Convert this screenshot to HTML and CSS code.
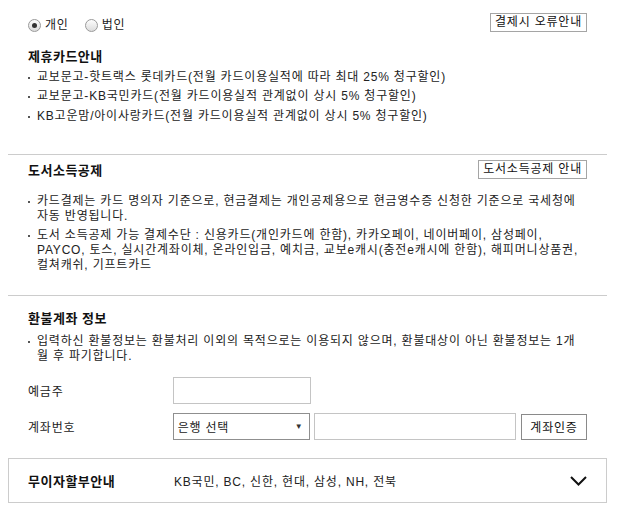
FILE: index.html
```html
<!DOCTYPE html>
<html lang="ko">
<head>
  <meta charset="UTF-8">
  <title>결제 안내</title>
  <link rel="stylesheet" href="styles.css">
</head>
<body>

<div class="wrap">

  <div class="section first">
    <div class="head-row">
      <div class="radios">
        <label class="radio checked"><span class="dot"></span>개인</label>
        <label class="radio"><span class="dot"></span>법인</label>
      </div>
      <button type="button" class="btn-line">결제시 오류안내</button>
    </div>
    <h3 class="tit">제휴카드안내</h3>
    <ul class="bullets">
      <li>교보문고-핫트랙스 롯데카드(전월 카드이용실적에 따라 최대 25% 청구할인)</li>
      <li>교보문고-KB국민카드(전월 카드이용실적 관계없이 상시 5% 청구할인)</li>
      <li>KB고운맘/아이사랑카드(전월 카드이용실적 관계없이 상시 5% 청구할인)</li>
    </ul>
  </div>

  <div class="section second">
    <div class="head-row bottom">
      <h3 class="tit">도서소득공제</h3>
      <button type="button" class="btn-line">도서소득공제 안내</button>
    </div>
    <ul class="bullets wide">
      <li>카드결제는 카드 명의자 기준으로, 현금결제는 개인공제용으로 현금영수증 신청한 기준으로 국세청에<br>자동 반영됩니다.</li>
      <li>도서 소득공제 가능 결제수단 : 신용카드(개인카드에 한함), 카카오페이, 네이버페이, 삼성페이,<br>PAYCO, 토스, 실시간계좌이체, 온라인입금, 예치금, 교보e캐시(충전e캐시에 한함), 해피머니상품권,<br>컬쳐캐쉬, 기프트카드</li>
    </ul>
  </div>

  <div class="section third">
    <h3 class="tit">환불계좌 정보</h3>
    <ul class="bullets wide">
      <li>입력하신 환불정보는 환불처리 이외의 목적으로는 이용되지 않으며, 환불대상이 아닌 환불정보는 1개<br>월 후 파기합니다.</li>
    </ul>
    <div class="form-row">
      <span class="label">예금주</span>
      <input type="text" class="inp name">
    </div>
    <div class="form-row">
      <span class="label">계좌번호</span>
      <div class="select">은행 선택<span class="arrow">▼</span></div>
      <input type="text" class="inp account">
      <button type="button" class="btn-auth">계좌인증</button>
    </div>
  </div>

  <div class="install">
    <strong class="install-tit">무이자할부안내</strong>
    <span class="install-txt">KB국민, BC, 신한, 현대, 삼성, NH, 전북</span>
    <svg class="chev" width="17" height="10" viewBox="0 0 17 10">
      <polyline points="1,1 8.5,8.5 16,1" fill="none" stroke="#111" stroke-width="2"/>
    </svg>
  </div>

</div>

</body>
</html>
```

FILE: styles.css
```css
body {
  margin: 8px;
  font-family: "Liberation Sans", "Noto Sans CJK KR", sans-serif;
  font-size: 12px;
  letter-spacing: 0.8px;
  color: #222;
  background: #fff;
}
.wrap {
  width: 599px;
}
.section {
  padding: 0 20px;
  border-bottom: 1px solid #ccc;
}
.section.first {
  padding-top: 5px;
  padding-bottom: 30px;
}
.section.second {
  padding-top: 5px;
  padding-bottom: 22px;
}
.section.third {
  border-bottom: none;
  padding-top: 15px;
  padding-bottom: 18px;
}
.head-row {
  display: flex;
  justify-content: space-between;
  align-items: center;
}
.head-row.bottom {
  align-items: flex-end;
}
.radios {
  display: flex;
  gap: 16px;
  align-self: flex-end;
}
.radio {
  display: flex;
  align-items: center;
  gap: 4px;
  line-height: 14px;
}
.dot {
  width: 11px;
  height: 11px;
  border: 1px solid #9a9a9a;
  border-radius: 50%;
  background: linear-gradient(#fdfdfd, #dcdcdc);
  display: flex;
  align-items: center;
  justify-content: center;
}
.radio.checked .dot::after {
  content: "";
  width: 5px;
  height: 5px;
  border-radius: 50%;
  background: #333;
}
.btn-line {
  height: 19px;
  padding: 0 4px;
  border: 1px solid #a5a5a5;
  background: #fff;
  font: inherit;
  letter-spacing: inherit;
  color: #111;
  line-height: 17px;
}
.tit {
  margin: 0;
  font-size: 13px;
  font-weight: bold;
  letter-spacing: 0.5px;
  line-height: 16px;
  color: #111;
}
.first .tit {
  margin-top: 17px;
}
.bullets {
  list-style: none;
  margin: 0;
  padding: 0;
}
.bullets li {
  display: flex;
  line-height: 15px;
  margin-top: 4.5px;
}
.bullets li::before {
  content: "";
  flex: none;
  width: 2px;
  height: 2px;
  background: #555;
  margin: 7px 7px 0 0;
}
.second .bullets {
  margin-top: 15px;
}
.third .bullets {
  margin-top: 7px;
}
.form-row {
  display: flex;
  align-items: center;
  gap: 4px;
}
.form-row + .form-row {
  margin-top: 9px;
}
.form-row:first-of-type {
  margin-top: 13px;
}
.label {
  width: 141px;
}
.inp {
  height: 27px;
  box-sizing: border-box;
  border: 1px solid #c4c4c4;
  padding: 0 4px;
  font: inherit;
}
.inp.name {
  width: 138px;
}
.inp.account {
  width: 202px;
}
.select {
  width: 138px;
  height: 27px;
  box-sizing: border-box;
  border: 1px solid #8f8f8f;
  display: flex;
  align-items: center;
  justify-content: space-between;
  padding: 0 6px 0 4px;
}
.arrow {
  font-size: 8px;
  color: #333;
}
.btn-auth {
  width: 66px;
  height: 26px;
  margin-left: 1px;
  border: 1px solid #8a8a8a;
  background: #fff;
  font: inherit;
  letter-spacing: inherit;
  color: #111;
}
.install {
  height: 45px;
  box-sizing: border-box;
  border: 1px solid #ccc;
  display: flex;
  align-items: center;
  padding: 0 19px;
}
.install-tit {
  width: 146px;
  font-size: 13px;
  letter-spacing: 0.5px;
  color: #111;
}
.install-txt {
  flex: 1;
}
```
